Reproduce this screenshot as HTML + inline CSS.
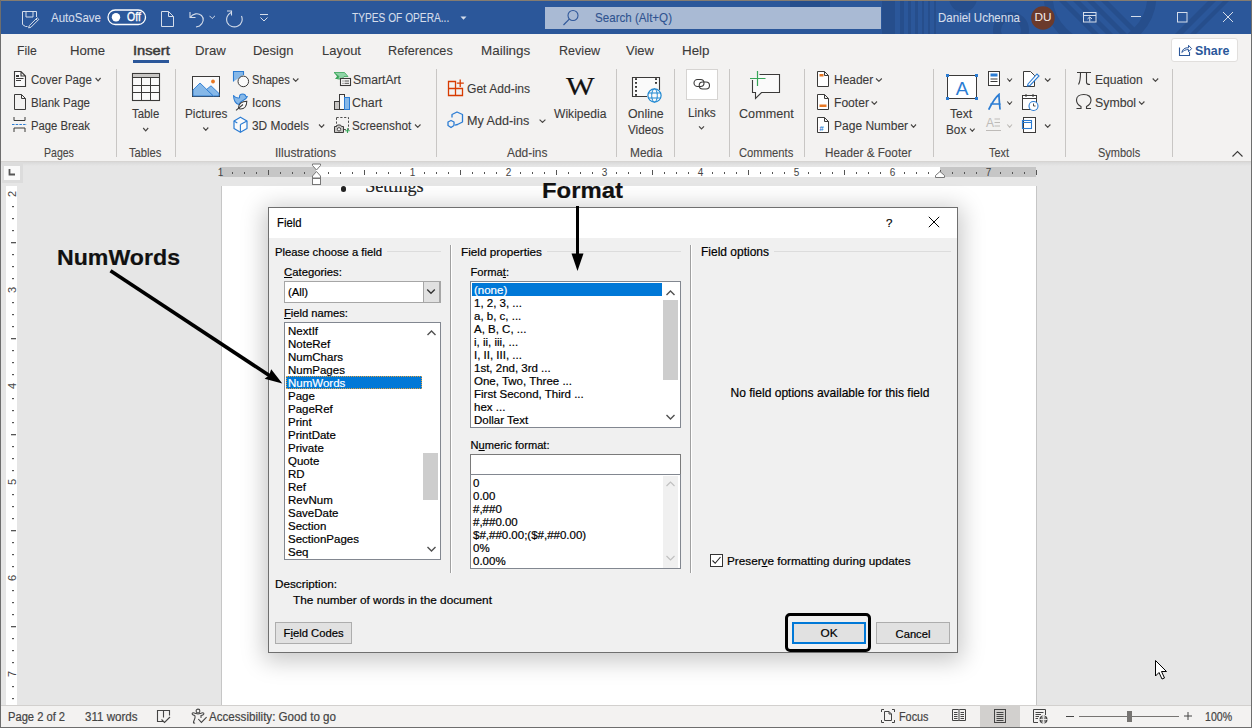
<!DOCTYPE html>
<html><head><meta charset="utf-8"><style>
html,body{margin:0;padding:0;width:1252px;height:728px;overflow:hidden;position:relative;background:#E6E6E6}
.t{position:absolute;white-space:nowrap;line-height:1;-webkit-text-stroke:0.2px currentColor}
.r{position:absolute;display:block}
u{text-decoration:underline;text-underline-offset:1px;text-decoration-thickness:1px}
</style></head><body>
<div class="r" style="left:0px;top:0px;width:1252px;height:728px;background:#E6E6E6"></div>
<div class="r" style="left:0px;top:0px;width:1252px;height:34px;background:#2B579A"></div>
<svg class="r" style="left:780px;top:0px;" width="472" height="34" viewBox="0 0 472 34">
<rect x="102" y="0" width="13" height="34" fill="#264E8C"/>
<rect x="120" y="0" width="4" height="34" fill="#264E8C"/>
<rect x="128" y="0" width="3" height="34" fill="#264E8C"/>
<rect x="135" y="0" width="3" height="34" fill="#264E8C"/>
<rect x="142" y="0" width="2" height="34" fill="#264E8C"/>
<rect x="148" y="0" width="2" height="34" fill="#264E8C"/>
<rect x="154" y="0" width="2" height="34" fill="#264E8C"/>
<circle cx="183" cy="-2" r="14" fill="#264E8C"/>
<circle cx="231" cy="30" r="14" fill="none" stroke="#264E8C" stroke-width="8"/>
<path d="M278 0 H285 L319 34 H312Z" fill="#264E8C"/>
<path d="M292 0 H299 L333 34 H326Z" fill="#264E8C"/>
<path d="M306 0 H313 L347 34 H340Z" fill="#264E8C"/>
<path d="M320 0 H327 L361 34 H354Z" fill="#264E8C"/>
<circle cx="320" cy="-5" r="52" fill="none" stroke="#264E8C" stroke-width="9"/>
<path d="M395 34 L429 0 H437 L403 34Z" fill="#264E8C"/>
<path d="M410 34 L444 0 H450 L416 34Z" fill="#264E8C"/>
<rect x="10" y="0" width="40" height="7" fill="#264E8C"/>
</svg>
<div class="r" style="left:0px;top:34px;width:1252px;height:127px;background:#F3F2F1"></div>
<div class="r" style="left:0px;top:161px;width:1252px;height:1px;background:#D6D4D2"></div>
<div class="r" style="left:0px;top:162px;width:1252px;height:4px;background:linear-gradient(#D9D9D9,#E6E6E6)"></div>
<div class="r" style="left:0px;top:0px;width:1252px;height:1px;background:#857C70"></div>
<div class="r" style="left:0px;top:0px;width:1px;height:728px;background:#6E6E6E"></div>
<div class="r" style="left:1251px;top:0px;width:1px;height:728px;background:#6E6E6E"></div>
<div class="r" style="left:0px;top:727px;width:1252px;height:1px;background:#6E6E6E"></div>
<svg class="r" style="left:21px;top:10px;" width="19" height="19" viewBox="0 0 19 19"><path d="M15.5 7 V1.5 H1.5 V14.5 L4.5 16.5 H6.5" fill="none" stroke="#D5DDEA" stroke-width="1"/>
<path d="M5 1.5 V7 H12 V1.5" fill="none" stroke="#D5DDEA" stroke-width="1"/>
<path d="M16.2 7.8 L17.8 9.4 L10 17.2 L7.6 17.9 L8.3 15.6Z M15 9 L16.6 10.6" fill="none" stroke="#D5DDEA" stroke-width="1"/></svg>
<div class="t" style="left:51.00px;top:11.57px;font-size:12.79px;color:#D5DDEA;font-weight:400;font-family:'Liberation Sans',sans-serif;transform:scaleX(0.9019);transform-origin:0 0;-webkit-text-stroke:0.1px currentColor;">AutoSave</div>
<svg class="r" style="left:107px;top:9px;" width="40" height="17" viewBox="0 0 40 17"><rect x="1" y="1" width="37.5" height="14.5" rx="7.25" fill="none" stroke="#FFFFFF" stroke-width="1.3"/>
<circle cx="9" cy="8.25" r="4.2" fill="#FFFFFF"/></svg>
<div class="t" style="left:126.80px;top:12.11px;font-size:11.92px;color:#FFFFFF;font-weight:400;font-family:'Liberation Sans',sans-serif;transform:scaleX(0.8806);transform-origin:0 0;-webkit-text-stroke:0.35px currentColor;">Off</div>
<svg class="r" style="left:160px;top:10px;" width="15" height="18" viewBox="0 0 15 18"><path d="M1.5 1.5 H8.5 L13.5 6.5 V16.5 H1.5Z M8.5 1.5 V6.5 H13.5" fill="none" stroke="#D5DDEA" stroke-width="1"/></svg>
<svg class="r" style="left:187px;top:10px;" width="18" height="18" viewBox="0 0 18 18"><path d="M3 2 V7.5 H8.5" fill="none" stroke="#D5DDEA" stroke-width="1.1"/>
<path d="M3.2 7.3 C6 3.5 11 2.5 14.5 5.5 C17.5 8.5 16.5 13 12.5 16 L9 17" fill="none" stroke="#D5DDEA" stroke-width="1.1"/></svg>
<svg class="r" style="left:209px;top:15px;" width="7" height="5" viewBox="0 0 7 5"><path d="M0.5 0.8 L3.2 3.5 L6 0.8" fill="none" stroke="#D5DDEA" stroke-width="1"/></svg>
<svg class="r" style="left:225px;top:10px;" width="20" height="18" viewBox="0 0 20 18"><path d="M6 2.5 C2 4.5 0.8 9 2.2 12.5 C4 16.5 9 18 13 16 C17 14 18 9.5 16.5 6" fill="none" stroke="#D5DDEA" stroke-width="1.1"/>
<path d="M2 1 H6.5 V5.5" fill="none" stroke="#D5DDEA" stroke-width="1.1"/></svg>
<svg class="r" style="left:259px;top:13px;" width="10" height="10" viewBox="0 0 10 10"><path d="M1 1.5 H9" stroke="#D5DDEA" stroke-width="1"/><path d="M1.5 4.5 L5 8 L8.5 4.5" fill="none" stroke="#D5DDEA" stroke-width="1"/></svg>
<div class="t" style="left:352.30px;top:11.97px;font-size:12.79px;color:#D5DDEA;font-weight:400;font-family:'Liberation Sans',sans-serif;transform:scaleX(0.7963);transform-origin:0 0;-webkit-text-stroke:0.1px currentColor;">TYPES OF OPERA...</div>
<svg class="r" style="left:460px;top:16px;" width="7" height="5" viewBox="0 0 7 5"><path d="M0.5 0.5 H6.5 L3.5 3.8Z" fill="#D5DDEA"/></svg>
<div class="r" style="left:545px;top:7px;width:336px;height:22px;background:#A9BAD4"></div>
<svg class="r" style="left:562px;top:9px;" width="18" height="17" viewBox="0 0 18 17"><circle cx="11" cy="6.5" r="5" fill="none" stroke="#30589A" stroke-width="1.1"/><path d="M7.3 10.2 L1.5 16" stroke="#30589A" stroke-width="1.2"/></svg>
<div class="t" style="left:594.50px;top:11.67px;font-size:12.79px;color:#2F5390;font-weight:400;font-family:'Liberation Sans',sans-serif;transform:scaleX(0.9072);transform-origin:0 0;-webkit-text-stroke:0.1px currentColor;">Search (Alt+Q)</div>
<div class="t" style="left:937.70px;top:11.97px;font-size:12.79px;color:#D5DDEA;font-weight:400;font-family:'Liberation Sans',sans-serif;transform:scaleX(0.9014);transform-origin:0 0;-webkit-text-stroke:0.1px currentColor;">Daniel Uchenna</div>
<svg class="r" style="left:1030px;top:6px;" width="26" height="25" viewBox="0 0 26 25"><circle cx="12.9" cy="12" r="11.8" fill="#6B3A2C"/></svg>
<div class="t" style="left:1034.48px;top:12.31px;font-size:11.80px;color:#F4ECE8;font-weight:400;font-family:'Liberation Sans',sans-serif;-webkit-text-stroke:0;">DU</div>
<svg class="r" style="left:1082px;top:11px;" width="16" height="12" viewBox="0 0 16 12"><rect x="1.5" y="1.5" width="12.5" height="9.5" fill="none" stroke="#D5DDEA" stroke-width="1"/><path d="M1.5 4.5 H14" stroke="#D5DDEA" stroke-width="1"/><path d="M7.75 10.5 V6 M5.5 8 L7.75 5.8 L10 8" fill="none" stroke="#D5DDEA" stroke-width="1"/></svg>
<div class="r" style="left:1131px;top:16px;width:10px;height:1px;background:#D5DDEA"></div>
<svg class="r" style="left:1176px;top:11px;" width="12" height="12" viewBox="0 0 12 12"><rect x="1.5" y="1.5" width="9.5" height="9.5" fill="none" stroke="#D5DDEA" stroke-width="1"/></svg>
<svg class="r" style="left:1222px;top:11px;" width="12" height="12" viewBox="0 0 12 12"><path d="M1 1 L11 11 M11 1 L1 11" stroke="#D5DDEA" stroke-width="1"/></svg>
<div class="t" style="left:17.30px;top:43.88px;font-size:13.37px;color:#3B3A39;font-weight:400;font-family:'Liberation Sans',sans-serif;transform:scaleX(0.9149);transform-origin:0 0;-webkit-text-stroke:0.1px currentColor;">File</div>
<div class="t" style="left:69.70px;top:43.88px;font-size:13.37px;color:#3B3A39;font-weight:400;font-family:'Liberation Sans',sans-serif;transform:scaleX(0.9876);transform-origin:0 0;-webkit-text-stroke:0.1px currentColor;">Home</div>
<div class="t" style="left:132.50px;top:43.88px;font-size:13.37px;color:#3B3A39;font-weight:400;font-family:'Liberation Sans',sans-serif;transform:scaleX(1.1000);transform-origin:0 0;-webkit-text-stroke:0.5px currentColor;">Insert</div>
<div class="t" style="left:194.70px;top:43.88px;font-size:13.37px;color:#3B3A39;font-weight:400;font-family:'Liberation Sans',sans-serif;transform:scaleX(0.9881);transform-origin:0 0;-webkit-text-stroke:0.1px currentColor;">Draw</div>
<div class="t" style="left:252.70px;top:43.88px;font-size:13.37px;color:#3B3A39;font-weight:400;font-family:'Liberation Sans',sans-serif;transform:scaleX(0.9709);transform-origin:0 0;-webkit-text-stroke:0.1px currentColor;">Design</div>
<div class="t" style="left:321.70px;top:43.88px;font-size:13.37px;color:#3B3A39;font-weight:400;font-family:'Liberation Sans',sans-serif;transform:scaleX(0.9712);transform-origin:0 0;-webkit-text-stroke:0.1px currentColor;">Layout</div>
<div class="t" style="left:388.30px;top:43.88px;font-size:13.37px;color:#3B3A39;font-weight:400;font-family:'Liberation Sans',sans-serif;transform:scaleX(0.9477);transform-origin:0 0;-webkit-text-stroke:0.1px currentColor;">References</div>
<div class="t" style="left:480.80px;top:43.88px;font-size:13.37px;color:#3B3A39;font-weight:400;font-family:'Liberation Sans',sans-serif;transform:scaleX(1.0055);transform-origin:0 0;-webkit-text-stroke:0.1px currentColor;">Mailings</div>
<div class="t" style="left:558.50px;top:43.88px;font-size:13.37px;color:#3B3A39;font-weight:400;font-family:'Liberation Sans',sans-serif;transform:scaleX(0.9404);transform-origin:0 0;-webkit-text-stroke:0.1px currentColor;">Review</div>
<div class="t" style="left:626.30px;top:43.88px;font-size:13.37px;color:#3B3A39;font-weight:400;font-family:'Liberation Sans',sans-serif;transform:scaleX(0.9750);transform-origin:0 0;-webkit-text-stroke:0.1px currentColor;">View</div>
<div class="t" style="left:681.50px;top:43.88px;font-size:13.37px;color:#3B3A39;font-weight:400;font-family:'Liberation Sans',sans-serif;transform:scaleX(1.0006);transform-origin:0 0;-webkit-text-stroke:0.1px currentColor;">Help</div>
<div class="r" style="left:133px;top:60px;width:36px;height:3px;background:#2B579A"></div>
<div class="r" style="left:1171px;top:38px;width:67px;height:24px;background:#FFFFFF;border:1px solid #E1DFDD;border-radius:3px;box-sizing:border-box"></div>
<svg class="r" style="left:1177px;top:42px;" width="16" height="16" viewBox="0 0 16 16"><path d="M2.5 5.5 V13.5 H12.5 V10" fill="none" stroke="#2B579A" stroke-width="1.1"/><path d="M4.8 10.5 C5.5 7 8 5.5 11.5 5.8 V3.3 L14.6 6.6 L11.5 9.8 V7.6 C8.8 7.4 6.6 8.5 4.8 10.5Z" fill="none" stroke="#2B579A" stroke-width="1" stroke-linejoin="round"/></svg>
<div class="t" style="left:1195.00px;top:44.13px;font-size:13.08px;color:#2B579A;font-weight:700;font-family:'Liberation Sans',sans-serif;transform:scaleX(0.9489);transform-origin:0 0;-webkit-text-stroke:0;">Share</div>
<svg class="r" style="left:13px;top:70px;" width="14" height="18" viewBox="0 0 14 18"><path d="M1.5 1.5 H8 L12.5 6 V16.5 H1.5Z M8 1.5 V6 H12.5" fill="#FAFAFA" stroke="#3B3A39" stroke-width="1.1"/><rect x="3" y="5" width="3" height="2" fill="#3B3A39"/><path d="M3 8.5 H10.5 M3 10.5 H8" stroke="#3B3A39" stroke-width="1"/></svg>
<div class="t" style="left:30.70px;top:73.96px;font-size:12.21px;color:#3B3A39;font-weight:400;font-family:'Liberation Sans',sans-serif;transform:scaleX(0.9438);transform-origin:0 0;-webkit-text-stroke:0.1px currentColor;">Cover Page</div>
<svg class="r" style="left:94px;top:77px;" width="8" height="5" viewBox="0 0 8 5"><path d="M1.60 1.00 L4.10 3.80 L6.60 1.00" fill="none" stroke="#484644" stroke-width="1.15"/></svg>
<svg class="r" style="left:13px;top:93px;" width="14" height="18" viewBox="0 0 14 18"><path d="M1.5 1.5 H8.5 L12.5 5.5 V16.5 H1.5Z M8.5 1.5 V5.5 H12.5" fill="none" stroke="#3B3A39" stroke-width="1"/></svg>
<div class="t" style="left:30.70px;top:96.96px;font-size:12.21px;color:#3B3A39;font-weight:400;font-family:'Liberation Sans',sans-serif;transform:scaleX(0.9454);transform-origin:0 0;-webkit-text-stroke:0.1px currentColor;">Blank Page</div>
<svg class="r" style="left:11px;top:116px;" width="17" height="17" viewBox="0 0 17 17"><path d="M3 1 V4.5 H14 V1" fill="none" stroke="#3B3A39" stroke-width="1"/><path d="M3 16 V12 H14 V16" fill="none" stroke="#3B3A39" stroke-width="1"/><path d="M1 8.5 H16" stroke="#2B7CD3" stroke-width="1" stroke-dasharray="2.5 1.2"/></svg>
<div class="t" style="left:30.70px;top:119.96px;font-size:12.21px;color:#3B3A39;font-weight:400;font-family:'Liberation Sans',sans-serif;transform:scaleX(0.9255);transform-origin:0 0;-webkit-text-stroke:0.1px currentColor;">Page Break</div>
<div class="t" style="left:44.00px;top:146.79px;font-size:12.06px;color:#484644;font-weight:400;font-family:'Liberation Sans',sans-serif;transform:scaleX(0.8746);transform-origin:0 0;-webkit-text-stroke:0.1px currentColor;">Pages</div>
<div class="r" style="left:116px;top:69px;width:1px;height:88px;background:#C8C6C4"></div>
<svg class="r" style="left:131px;top:72px;" width="30" height="30" viewBox="0 0 30 30"><rect x="1.5" y="1.5" width="27" height="27" fill="#FAFAFA" stroke="#3B3A39" stroke-width="1.1"/><rect x="2" y="2" width="26" height="3.5" fill="#C8C6C4"/><path d="M1.5 5.5 H28.5 M1.5 13.5 H28.5 M1.5 20.5 H28.5 M10.5 5.5 V28.5 M19.5 5.5 V28.5" stroke="#3B3A39" stroke-width="1"/></svg>
<div class="t" style="left:132.40px;top:108.06px;font-size:12.21px;color:#3B3A39;font-weight:400;font-family:'Liberation Sans',sans-serif;transform:scaleX(0.9329);transform-origin:0 0;-webkit-text-stroke:0.1px currentColor;">Table</div>
<svg class="r" style="left:142px;top:127px;" width="8" height="5" viewBox="0 0 8 5"><path d="M1.20 1.00 L3.70 3.80 L6.20 1.00" fill="none" stroke="#484644" stroke-width="1.15"/></svg>
<div class="t" style="left:129.40px;top:146.79px;font-size:12.06px;color:#484644;font-weight:400;font-family:'Liberation Sans',sans-serif;transform:scaleX(0.9323);transform-origin:0 0;-webkit-text-stroke:0.1px currentColor;">Tables</div>
<div class="r" style="left:175px;top:69px;width:1px;height:88px;background:#C8C6C4"></div>
<svg class="r" style="left:191px;top:75px;" width="30" height="23" viewBox="0 0 30 23"><rect x="1.5" y="1.5" width="27" height="20" fill="#FAFAFA" stroke="#3B3A39" stroke-width="1"/><path d="M2 21 V15 L9 8 L22.5 21Z" fill="#86B8E8" stroke="#2B7CD3" stroke-width="0.9"/><path d="M15.5 14.5 L20 10.8 L28 18.5 V21 H22.5Z" fill="#86B8E8" stroke="#2B7CD3" stroke-width="0.9"/><circle cx="22" cy="6.5" r="1.9" fill="#E87722"/></svg>
<div class="t" style="left:185.00px;top:108.16px;font-size:12.21px;color:#3B3A39;font-weight:400;font-family:'Liberation Sans',sans-serif;transform:scaleX(0.9639);transform-origin:0 0;-webkit-text-stroke:0.1px currentColor;">Pictures</div>
<svg class="r" style="left:202px;top:126px;" width="8" height="5" viewBox="0 0 8 5"><path d="M1.30 1.50 L3.80 4.30 L6.30 1.50" fill="none" stroke="#484644" stroke-width="1.15"/></svg>
<svg class="r" style="left:232px;top:70px;" width="18" height="18" viewBox="0 0 18 18"><path d="M1.5 11.5 V1.5 H11.5 V5" fill="#86B8E8" stroke="#2B7CD3" stroke-width="1.1"/><rect x="2" y="2" width="6" height="6" fill="#86B8E8"/><circle cx="11.3" cy="11.4" r="5.3" fill="#FAFAFA" stroke="#3B3A39" stroke-width="1"/></svg>
<div class="t" style="left:251.70px;top:74.26px;font-size:12.21px;color:#3B3A39;font-weight:400;font-family:'Liberation Sans',sans-serif;transform:scaleX(0.9136);transform-origin:0 0;-webkit-text-stroke:0.1px currentColor;">Shapes</div>
<svg class="r" style="left:292px;top:77px;" width="8" height="5" viewBox="0 0 8 5"><path d="M1.00 1.50 L3.70 4.30 L6.40 1.50" fill="none" stroke="#484644" stroke-width="1.15"/></svg>
<svg class="r" style="left:232px;top:93px;" width="18" height="18" viewBox="0 0 18 18"><path d="M1.5 2.5 Q4 5.5 7.5 4.8 Q7 1 10.8 1 Q13.3 1 13.8 3.3 L15.3 3.5 Q14 6.5 11.5 7.2 Q8.5 8.3 6.8 11.5 Q2 10.5 1.5 2.5Z" fill="#86B8E8" stroke="#2B7CD3" stroke-width="1.1" stroke-linejoin="round"/><path d="M6.5 15 C6.5 10.8 9.5 8.3 14.8 8.3 C14.8 13 12.3 16 8.5 16 C7.6 16 7 15.6 6.5 15Z" fill="#FAFAFA" stroke="#3B3A39" stroke-width="1.05"/><path d="M4 17.3 L11 11.5" stroke="#3B3A39" stroke-width="1.05"/></svg>
<div class="t" style="left:251.70px;top:97.16px;font-size:12.21px;color:#3B3A39;font-weight:400;font-family:'Liberation Sans',sans-serif;transform:scaleX(0.9838);transform-origin:0 0;-webkit-text-stroke:0.1px currentColor;">Icons</div>
<svg class="r" style="left:233px;top:116px;" width="16" height="18" viewBox="0 0 16 18"><path d="M7.4 1.2 L14 5 V12.5 L7.4 16.3 L1 12.5 V5Z" fill="#FAFAFA" stroke="#2B7CD3" stroke-width="1.2" stroke-linejoin="round"/><path d="M7.4 8.6 V16.3 M7.4 8.6 L14 5 M1 5 L4.3 6.9" fill="none" stroke="#2B7CD3" stroke-width="1.1"/></svg>
<div class="t" style="left:251.70px;top:120.16px;font-size:12.21px;color:#3B3A39;font-weight:400;font-family:'Liberation Sans',sans-serif;transform:scaleX(0.9755);transform-origin:0 0;-webkit-text-stroke:0.1px currentColor;">3D Models</div>
<svg class="r" style="left:318px;top:123px;" width="8" height="5" viewBox="0 0 8 5"><path d="M1.00 1.50 L3.60 4.30 L6.20 1.50" fill="none" stroke="#484644" stroke-width="1.15"/></svg>
<svg class="r" style="left:333px;top:71px;" width="19" height="16" viewBox="0 0 19 16"><path d="M1 1.5 H11.5 L15 5.5 H11 L9 8 H4.5 L6 5.5Z" fill="#8FD3A6" stroke="#37A558" stroke-width="0.8"/><path d="M1 1.5 L6 5.5 L4.5 8 H2 L4 5.5Z" fill="#37A558"/><rect x="7.5" y="7.5" width="10" height="7" fill="#FAFAFA" stroke="#3B3A39" stroke-width="1.1"/><path d="M9.5 10 H10.5 M11.5 10 H16 M9.5 12.3 H10.5 M11.5 12.3 H16" stroke="#3B3A39" stroke-width="0.9"/></svg>
<div class="t" style="left:352.60px;top:74.16px;font-size:12.21px;color:#3B3A39;font-weight:400;font-family:'Liberation Sans',sans-serif;transform:scaleX(0.9971);transform-origin:0 0;-webkit-text-stroke:0.1px currentColor;">SmartArt</div>
<svg class="r" style="left:333px;top:93px;" width="18" height="18" viewBox="0 0 18 18"><rect x="1.5" y="8.5" width="5" height="8" fill="#C8C6C4" stroke="#3B3A39" stroke-width="1"/><rect x="6.5" y="1.5" width="5" height="15" fill="#FAFAFA" stroke="#3B3A39" stroke-width="1"/><rect x="11.5" y="4.5" width="5" height="12" fill="#86B8E8" stroke="#2B7CD3" stroke-width="1"/></svg>
<div class="t" style="left:352.40px;top:97.16px;font-size:12.21px;color:#3B3A39;font-weight:400;font-family:'Liberation Sans',sans-serif;transform:scaleX(1.0125);transform-origin:0 0;-webkit-text-stroke:0.1px currentColor;">Chart</div>
<svg class="r" style="left:333px;top:116px;" width="19" height="18" viewBox="0 0 19 18"><rect x="3.5" y="1.5" width="12" height="12" fill="none" stroke="#3B3A39" stroke-width="0.9" stroke-dasharray="2.2 1.6"/><path d="M1.5 10.5 H3.5 L4.5 9 H7.5 L8.5 10.5 H10.5 V16.5 H1.5Z" fill="#C8C6C4" stroke="#3B3A39" stroke-width="1"/><circle cx="6" cy="13.3" r="1.7" fill="#FAFAFA" stroke="#3B3A39" stroke-width="0.9"/><path d="M14.5 12.3 V17 M12.2 14.7 H16.8" stroke="#37A558" stroke-width="1.1"/></svg>
<div class="t" style="left:352.40px;top:120.16px;font-size:12.21px;color:#3B3A39;font-weight:400;font-family:'Liberation Sans',sans-serif;transform:scaleX(0.9592);transform-origin:0 0;-webkit-text-stroke:0.1px currentColor;">Screenshot</div>
<svg class="r" style="left:414px;top:123px;" width="8" height="5" viewBox="0 0 8 5"><path d="M1.00 1.50 L3.75 4.30 L6.50 1.50" fill="none" stroke="#484644" stroke-width="1.15"/></svg>
<div class="t" style="left:275.00px;top:146.79px;font-size:12.06px;color:#484644;font-weight:400;font-family:'Liberation Sans',sans-serif;transform:scaleX(1.0019);transform-origin:0 0;-webkit-text-stroke:0.1px currentColor;">Illustrations</div>
<div class="r" style="left:436px;top:69px;width:1px;height:88px;background:#C8C6C4"></div>
<svg class="r" style="left:447px;top:78px;" width="18" height="20" viewBox="0 0 18 20"><path d="M1.5 3.5 H8.5 V10.5 H1.5Z M1.5 10.5 V17.5 H15.5 V10.5 H8.5 V17.5" fill="none" stroke="#D83B01" stroke-width="1.3"/><path d="M13.2 1.5 V9 M9.8 5.1 H16.8" stroke="#D83B01" stroke-width="1.3"/></svg>
<div class="t" style="left:467.10px;top:82.86px;font-size:12.21px;color:#3B3A39;font-weight:400;font-family:'Liberation Sans',sans-serif;transform:scaleX(0.9898);transform-origin:0 0;-webkit-text-stroke:0.1px currentColor;">Get Add-ins</div>
<svg class="r" style="left:446px;top:110px;" width="19" height="20" viewBox="0 0 19 20"><path d="M6 7.5 V4.5 L11 2 L16.5 4.5 V12 L11.5 14.5 L9 15.2" fill="none" stroke="#2B7CD3" stroke-width="1.3" stroke-linejoin="round"/><path d="M5 10.5 L8 12 V15.5 L5 17.5 L2 15.5 V12Z" fill="none" stroke="#2B7CD3" stroke-width="1.3" stroke-linejoin="round"/></svg>
<div class="t" style="left:467.10px;top:115.16px;font-size:12.21px;color:#3B3A39;font-weight:400;font-family:'Liberation Sans',sans-serif;transform:scaleX(1.0319);transform-origin:0 0;-webkit-text-stroke:0.1px currentColor;">My Add-ins</div>
<svg class="r" style="left:538px;top:118px;" width="8" height="5" viewBox="0 0 8 5"><path d="M1.60 1.60 L4.50 4.40 L7.40 1.60" fill="none" stroke="#484644" stroke-width="1.15"/></svg>
<div class="t" style="left:566.00px;top:73.57px;font-size:25.95px;color:#111;font-weight:400;font-family:'Liberation Serif',serif;transform:scaleX(1.1633);transform-origin:0 0;">W</div>
<div class="t" style="left:554.00px;top:108.06px;font-size:12.21px;color:#3B3A39;font-weight:400;font-family:'Liberation Sans',sans-serif;transform:scaleX(0.9904);transform-origin:0 0;-webkit-text-stroke:0.1px currentColor;">Wikipedia</div>
<div class="t" style="left:506.60px;top:146.79px;font-size:12.06px;color:#484644;font-weight:400;font-family:'Liberation Sans',sans-serif;transform:scaleX(0.9904);transform-origin:0 0;-webkit-text-stroke:0.1px currentColor;">Add-ins</div>
<div class="r" style="left:616px;top:69px;width:1px;height:88px;background:#C8C6C4"></div>
<svg class="r" style="left:630px;top:76px;" width="34" height="28" viewBox="0 0 34 28"><path d="M22 20.5 H2.5 V1.5 H29.5 V14" fill="#FAFAFA" stroke="#3B3A39" stroke-width="1.1"/><g fill="#3B3A39"><rect x="5" y="2.2" width="2" height="1.8"/><rect x="5" y="6" width="2" height="1.8"/><rect x="5" y="10" width="2" height="1.8"/><rect x="5" y="14" width="2" height="1.8"/><rect x="5" y="18" width="2" height="1.8"/><rect x="25" y="2.2" width="2" height="1.8"/><rect x="25" y="6" width="2" height="1.8"/></g><circle cx="24.5" cy="19.5" r="7.6" fill="#F3F2F1"/><circle cx="24.5" cy="19.5" r="6.6" fill="#FAFAFA" stroke="#1F88D2" stroke-width="1.2"/><ellipse cx="24.5" cy="19.5" rx="2.8" ry="6.6" fill="none" stroke="#1F88D2" stroke-width="1"/><path d="M18.2 17 H30.8 M18.2 22 H30.8" stroke="#1F88D2" stroke-width="1"/></svg>
<div class="t" style="left:627.80px;top:108.06px;font-size:12.21px;color:#3B3A39;font-weight:400;font-family:'Liberation Sans',sans-serif;transform:scaleX(1.0123);transform-origin:0 0;-webkit-text-stroke:0.1px currentColor;">Online</div>
<div class="t" style="left:627.80px;top:123.56px;font-size:12.21px;color:#3B3A39;font-weight:400;font-family:'Liberation Sans',sans-serif;transform:scaleX(0.9624);transform-origin:0 0;-webkit-text-stroke:0.1px currentColor;">Videos</div>
<div class="t" style="left:630.00px;top:146.79px;font-size:12.06px;color:#484644;font-weight:400;font-family:'Liberation Sans',sans-serif;transform:scaleX(0.9865);transform-origin:0 0;-webkit-text-stroke:0.1px currentColor;">Media</div>
<div class="r" style="left:674px;top:69px;width:1px;height:88px;background:#C8C6C4"></div>
<div class="r" style="left:686px;top:69px;width:32px;height:31px;background:#FFFFFF;border:1px solid #D6D4D2;box-sizing:border-box"></div>
<svg class="r" style="left:692px;top:78px;" width="19" height="13" viewBox="0 0 19 13"><rect x="2" y="1.5" width="10" height="7" rx="3.5" fill="none" stroke="#3B3A39" stroke-width="1.1"/><rect x="7.2" y="4" width="10.3" height="7" rx="3.5" fill="none" stroke="#3B3A39" stroke-width="1.1"/></svg>
<div class="t" style="left:687.70px;top:106.76px;font-size:12.21px;color:#3B3A39;font-weight:400;font-family:'Liberation Sans',sans-serif;transform:scaleX(0.9754);transform-origin:0 0;-webkit-text-stroke:0.1px currentColor;">Links</div>
<svg class="r" style="left:698px;top:125px;" width="8" height="5" viewBox="0 0 8 5"><path d="M1.00 1.30 L3.50 3.90 L6.00 1.30" fill="none" stroke="#484644" stroke-width="1.15"/></svg>
<div class="r" style="left:729px;top:69px;width:1px;height:88px;background:#C8C6C4"></div>
<svg class="r" style="left:748px;top:69px;" width="34" height="32" viewBox="0 0 34 32"><path d="M11.5 5.5 H31.5 V23.5 H13.5 L7.5 29.5 V23.5 H4.5 V11" fill="#FAFAFA" stroke="#3B3A39" stroke-width="1.1"/><path d="M9.5 2 V17 M2 9.5 H17.5" stroke="#37A558" stroke-width="1.2"/></svg>
<div class="t" style="left:738.80px;top:108.06px;font-size:12.21px;color:#3B3A39;font-weight:400;font-family:'Liberation Sans',sans-serif;transform:scaleX(1.0342);transform-origin:0 0;-webkit-text-stroke:0.1px currentColor;">Comment</div>
<div class="t" style="left:738.80px;top:146.79px;font-size:12.06px;color:#484644;font-weight:400;font-family:'Liberation Sans',sans-serif;transform:scaleX(0.9314);transform-origin:0 0;-webkit-text-stroke:0.1px currentColor;">Comments</div>
<div class="r" style="left:804px;top:69px;width:1px;height:88px;background:#C8C6C4"></div>
<svg class="r" style="left:816px;top:70px;" width="14" height="18" viewBox="0 0 14 18"><path d="M1.5 1.5 H8.5 L12.5 5.5 V16.5 H1.5Z M8.5 1.5 V5.5 H12.5" fill="#FFFFFF" stroke="#3B3A39" stroke-width="1"/><rect x="3.5" y="4" width="4" height="2.5" fill="#E87722"/></svg>
<div class="t" style="left:833.70px;top:74.16px;font-size:12.21px;color:#3B3A39;font-weight:400;font-family:'Liberation Sans',sans-serif;transform:scaleX(0.9800);transform-origin:0 0;-webkit-text-stroke:0.1px currentColor;">Header</div>
<svg class="r" style="left:875px;top:77px;" width="8" height="5" viewBox="0 0 8 5"><path d="M1.00 1.50 L3.90 4.30 L6.80 1.50" fill="none" stroke="#484644" stroke-width="1.15"/></svg>
<svg class="r" style="left:816px;top:93px;" width="14" height="18" viewBox="0 0 14 18"><path d="M1.5 1.5 H8.5 L12.5 5.5 V16.5 H1.5Z M8.5 1.5 V5.5 H12.5" fill="#FFFFFF" stroke="#3B3A39" stroke-width="1"/><rect x="3.5" y="11.5" width="7" height="2.5" fill="#E87722"/></svg>
<div class="t" style="left:833.70px;top:97.16px;font-size:12.21px;color:#3B3A39;font-weight:400;font-family:'Liberation Sans',sans-serif;transform:scaleX(0.9901);transform-origin:0 0;-webkit-text-stroke:0.1px currentColor;">Footer</div>
<svg class="r" style="left:870px;top:100px;" width="8" height="5" viewBox="0 0 8 5"><path d="M1.60 1.50 L4.30 4.30 L7.00 1.50" fill="none" stroke="#484644" stroke-width="1.15"/></svg>
<svg class="r" style="left:816px;top:116px;" width="14" height="18" viewBox="0 0 14 18"><path d="M1.5 1.5 H8.5 L12.5 5.5 V16.5 H1.5Z M8.5 1.5 V5.5 H12.5" fill="#FFFFFF" stroke="#3B3A39" stroke-width="1"/><text x="3.2" y="14.5" font-size="8" font-family="Liberation Sans" font-weight="700" fill="#2B7CD3">#</text></svg>
<div class="t" style="left:833.70px;top:120.16px;font-size:12.21px;color:#3B3A39;font-weight:400;font-family:'Liberation Sans',sans-serif;transform:scaleX(0.9845);transform-origin:0 0;-webkit-text-stroke:0.1px currentColor;">Page Number</div>
<svg class="r" style="left:910px;top:123px;" width="8" height="5" viewBox="0 0 8 5"><path d="M1.00 1.50 L3.50 4.30 L6.00 1.50" fill="none" stroke="#484644" stroke-width="1.15"/></svg>
<div class="t" style="left:825.10px;top:146.79px;font-size:12.06px;color:#484644;font-weight:400;font-family:'Liberation Sans',sans-serif;transform:scaleX(0.9717);transform-origin:0 0;-webkit-text-stroke:0.1px currentColor;">Header &amp; Footer</div>
<div class="r" style="left:933px;top:69px;width:1px;height:88px;background:#C8C6C4"></div>
<svg class="r" style="left:945px;top:73px;" width="34" height="28" viewBox="0 0 34 28"><rect x="2.5" y="2.5" width="29" height="23" fill="#FFFFFF" stroke="#3B3A39" stroke-width="1"/><text x="17" y="22" font-size="19" text-anchor="middle" font-family="Liberation Sans" fill="#2B7CD3">A</text><rect x="1" y="1" width="3" height="3" fill="#2B7CD3"/><rect x="30" y="1" width="3" height="3" fill="#2B7CD3"/><rect x="1" y="24" width="3" height="3" fill="#2B7CD3"/><rect x="30" y="24" width="3" height="3" fill="#2B7CD3"/></svg>
<div class="t" style="left:950.40px;top:107.66px;font-size:12.21px;color:#3B3A39;font-weight:400;font-family:'Liberation Sans',sans-serif;transform:scaleX(0.9922);transform-origin:0 0;-webkit-text-stroke:0.1px currentColor;">Text</div>
<div class="t" style="left:945.80px;top:124.16px;font-size:12.21px;color:#3B3A39;font-weight:400;font-family:'Liberation Sans',sans-serif;transform:scaleX(0.9652);transform-origin:0 0;-webkit-text-stroke:0.1px currentColor;">Box</div>
<svg class="r" style="left:969px;top:127px;" width="7" height="5" viewBox="0 0 7 5"><path d="M1.00 1.70 L3.30 4.30 L5.60 1.70" fill="none" stroke="#484644" stroke-width="1.15"/></svg>
<svg class="r" style="left:986px;top:70px;" width="16" height="18" viewBox="0 0 16 18"><rect x="2.5" y="1.5" width="11" height="14" fill="#FFFFFF" stroke="#3B3A39" stroke-width="1"/><rect x="4.5" y="3.5" width="7" height="3" fill="#2B7CD3"/><path d="M4.5 9 H11.5 M4.5 11.5 H11.5" stroke="#3B3A39" stroke-width="1"/></svg>
<svg class="r" style="left:1006px;top:77px;" width="7" height="5" viewBox="0 0 7 5"><path d="M1.30 1.50 L3.65 4.30 L6.00 1.50" fill="none" stroke="#484644" stroke-width="1.15"/></svg>
<svg class="r" style="left:986px;top:93px;" width="16" height="18" viewBox="0 0 16 18"><path d="M3 16 C6 10 10 4 13 1.5 C13 6 13.5 11 14 16 M5 11 H14" fill="none" stroke="#2B7CD3" stroke-width="1.7" stroke-linecap="round"/></svg>
<svg class="r" style="left:1006px;top:100px;" width="7" height="5" viewBox="0 0 7 5"><path d="M1.30 1.50 L3.65 4.30 L6.00 1.50" fill="none" stroke="#484644" stroke-width="1.15"/></svg>
<svg class="r" style="left:985px;top:115px;" width="18" height="18" viewBox="0 0 18 18"><text x="1" y="12" font-size="12" font-family="Liberation Sans" fill="#BEBBB8">A</text><path d="M9.5 4 H15 M9.5 7.5 H15 M9.5 11 H15 M1 15.5 H16" stroke="#BEBBB8" stroke-width="1"/></svg>
<svg class="r" style="left:1006px;top:123px;" width="7" height="5" viewBox="0 0 7 5"><path d="M1.30 1.50 L3.65 4.30 L6.00 1.50" fill="none" stroke="#BEBBB8" stroke-width="1.15"/></svg>
<svg class="r" style="left:1022px;top:70px;" width="18" height="18" viewBox="0 0 18 18"><path d="M1.5 1.5 H8.5 L12.5 5.5 V16.5 H1.5Z" fill="#FFFFFF" stroke="#3B3A39" stroke-width="1"/><path d="M6 14 L15 4 L17 6 L8 15.5 L5.5 16Z" fill="#FFFFFF" stroke="#2B7CD3" stroke-width="1.1"/></svg>
<svg class="r" style="left:1044px;top:77px;" width="8" height="5" viewBox="0 0 8 5"><path d="M1.00 1.50 L3.70 4.30 L6.40 1.50" fill="none" stroke="#484644" stroke-width="1.15"/></svg>
<svg class="r" style="left:1021px;top:93px;" width="19" height="19" viewBox="0 0 19 19"><rect x="1.5" y="2.5" width="14" height="14" fill="#FFFFFF" stroke="#3B3A39" stroke-width="1"/><path d="M1.5 5.5 H15.5 M5 1 V4 M12 1 V4" stroke="#3B3A39" stroke-width="1"/><circle cx="12.5" cy="13" r="4.5" fill="#FFFFFF" stroke="#2B7CD3" stroke-width="1.1"/><path d="M12.5 10.5 V13 H14.5" fill="none" stroke="#3B3A39" stroke-width="0.9"/></svg>
<svg class="r" style="left:1021px;top:116px;" width="17" height="18" viewBox="0 0 17 18"><rect x="2.5" y="1.5" width="12" height="15" fill="#FFFFFF" stroke="#3B3A39" stroke-width="1"/><rect x="1.5" y="4.5" width="9" height="8" fill="none" stroke="#2B7CD3" stroke-width="1.1"/><path d="M1.5 6.5 H10.5" stroke="#2B7CD3" stroke-width="1"/></svg>
<svg class="r" style="left:1044px;top:123px;" width="8" height="5" viewBox="0 0 8 5"><path d="M1.00 1.50 L3.70 4.30 L6.40 1.50" fill="none" stroke="#484644" stroke-width="1.15"/></svg>
<div class="t" style="left:989.20px;top:146.79px;font-size:12.06px;color:#484644;font-weight:400;font-family:'Liberation Sans',sans-serif;transform:scaleX(0.9046);transform-origin:0 0;-webkit-text-stroke:0.1px currentColor;">Text</div>
<div class="r" style="left:1065px;top:69px;width:1px;height:88px;background:#C8C6C4"></div>
<svg class="r" style="left:1076px;top:71px;" width="16" height="15" viewBox="0 0 16 15"><path d="M1 1.5 H15 M4.5 1.5 C4.5 6 4.5 10 2.5 13.5 M10.5 1.5 V11.5 C10.5 13 11.5 13.5 14 13.5" fill="none" stroke="#3B3A39" stroke-width="1.1"/></svg>
<div class="t" style="left:1094.70px;top:74.16px;font-size:12.21px;color:#3B3A39;font-weight:400;font-family:'Liberation Sans',sans-serif;transform:scaleX(0.9905);transform-origin:0 0;-webkit-text-stroke:0.1px currentColor;">Equation</div>
<svg class="r" style="left:1151px;top:77px;" width="8" height="5" viewBox="0 0 8 5"><path d="M1.70 1.50 L4.45 4.30 L7.20 1.50" fill="none" stroke="#484644" stroke-width="1.15"/></svg>
<svg class="r" style="left:1075px;top:93px;" width="18" height="18" viewBox="0 0 18 18"><path d="M1.5 15.5 H6 V13.5 C3 12 1.5 9.5 1.5 7 C1.5 3.5 4.5 1.5 8.75 1.5 C13 1.5 16 3.5 16 7 C16 9.5 14.5 12 11.5 13.5 V15.5 H16" fill="none" stroke="#3B3A39" stroke-width="1.1"/></svg>
<div class="t" style="left:1094.70px;top:97.16px;font-size:12.21px;color:#3B3A39;font-weight:400;font-family:'Liberation Sans',sans-serif;transform:scaleX(1.0098);transform-origin:0 0;-webkit-text-stroke:0.1px currentColor;">Symbol</div>
<svg class="r" style="left:1138px;top:100px;" width="8" height="5" viewBox="0 0 8 5"><path d="M1.00 1.50 L3.70 4.30 L6.40 1.50" fill="none" stroke="#484644" stroke-width="1.15"/></svg>
<div class="t" style="left:1098.10px;top:146.79px;font-size:12.06px;color:#484644;font-weight:400;font-family:'Liberation Sans',sans-serif;transform:scaleX(0.9124);transform-origin:0 0;-webkit-text-stroke:0.1px currentColor;">Symbols</div>
<div class="r" style="left:1172px;top:69px;width:1px;height:88px;background:#C8C6C4"></div>
<svg class="r" style="left:1231px;top:150px;" width="13" height="8" viewBox="0 0 13 8"><path d="M1.5 6.5 L6.5 1.5 L11.5 6.5" fill="none" stroke="#3B3A39" stroke-width="1.1"/></svg>
<div class="r" style="left:221px;top:186px;width:816px;height:519px;background:#FFFFFF;border-left:1px solid #C6C6C6;border-right:1px solid #C6C6C6;box-sizing:border-box"></div>
<div class="r" style="left:222px;top:186px;width:814px;height:30px;overflow:hidden">
<div style="position:absolute;left:119.2px;top:0.3px;width:5.3px;height:5.3px;border-radius:50%;background:#222"></div>
<div class="t" style="left:143.20px;top:-9.00px;font-size:18.15px;color:#222;font-weight:400;font-family:'Liberation Serif',serif;">Settings</div>
</div>
<div class="r" style="left:2px;top:162px;width:21px;height:21px;background:#DCDCDC"></div>
<div class="r" style="left:4px;top:166px;width:16px;height:14px;background:#FAFAFA"></div>
<svg class="r" style="left:8px;top:169px;" width="8" height="8" viewBox="0 0 8 8"><path d="M1.5 0 V5.5 H7" fill="none" stroke="#555" stroke-width="1.8"/></svg>
<div class="r" style="left:220px;top:167px;width:816px;height:10px;background:#C6C6C6"></div>
<div class="r" style="left:316px;top:167px;width:624px;height:10px;background:#FFFFFF"></div>
<svg class="r" style="left:212px;top:167px;" width="830" height="10" viewBox="0 0 830 10"><text x="8.5" y="9" font-size="10" text-anchor="middle" font-family="Liberation Sans" fill="#444">1</text><rect x="20" y="5" width="1" height="2" fill="#555"/><rect x="32" y="5" width="1" height="2" fill="#555"/><rect x="44" y="5" width="1" height="2" fill="#555"/><rect x="56" y="3" width="1" height="5" fill="#555"/><rect x="68" y="5" width="1" height="2" fill="#555"/><rect x="80" y="5" width="1" height="2" fill="#555"/><rect x="92" y="5" width="1" height="2" fill="#555"/><rect x="116" y="5" width="1" height="2" fill="#555"/><rect x="128" y="5" width="1" height="2" fill="#555"/><rect x="140" y="5" width="1" height="2" fill="#555"/><rect x="152" y="3" width="1" height="5" fill="#555"/><rect x="164" y="5" width="1" height="2" fill="#555"/><rect x="176" y="5" width="1" height="2" fill="#555"/><rect x="188" y="5" width="1" height="2" fill="#555"/><text x="200.5" y="9" font-size="10" text-anchor="middle" font-family="Liberation Sans" fill="#444">1</text><rect x="212" y="5" width="1" height="2" fill="#555"/><rect x="224" y="5" width="1" height="2" fill="#555"/><rect x="236" y="5" width="1" height="2" fill="#555"/><rect x="248" y="3" width="1" height="5" fill="#555"/><rect x="260" y="5" width="1" height="2" fill="#555"/><rect x="272" y="5" width="1" height="2" fill="#555"/><rect x="284" y="5" width="1" height="2" fill="#555"/><text x="296.5" y="9" font-size="10" text-anchor="middle" font-family="Liberation Sans" fill="#444">2</text><rect x="308" y="5" width="1" height="2" fill="#555"/><rect x="320" y="5" width="1" height="2" fill="#555"/><rect x="332" y="5" width="1" height="2" fill="#555"/><rect x="344" y="3" width="1" height="5" fill="#555"/><rect x="356" y="5" width="1" height="2" fill="#555"/><rect x="368" y="5" width="1" height="2" fill="#555"/><rect x="380" y="5" width="1" height="2" fill="#555"/><text x="392.5" y="9" font-size="10" text-anchor="middle" font-family="Liberation Sans" fill="#444">3</text><rect x="404" y="5" width="1" height="2" fill="#555"/><rect x="416" y="5" width="1" height="2" fill="#555"/><rect x="428" y="5" width="1" height="2" fill="#555"/><rect x="440" y="3" width="1" height="5" fill="#555"/><rect x="452" y="5" width="1" height="2" fill="#555"/><rect x="464" y="5" width="1" height="2" fill="#555"/><rect x="476" y="5" width="1" height="2" fill="#555"/><text x="488.5" y="9" font-size="10" text-anchor="middle" font-family="Liberation Sans" fill="#444">4</text><rect x="500" y="5" width="1" height="2" fill="#555"/><rect x="512" y="5" width="1" height="2" fill="#555"/><rect x="524" y="5" width="1" height="2" fill="#555"/><rect x="536" y="3" width="1" height="5" fill="#555"/><rect x="548" y="5" width="1" height="2" fill="#555"/><rect x="560" y="5" width="1" height="2" fill="#555"/><rect x="572" y="5" width="1" height="2" fill="#555"/><text x="584.5" y="9" font-size="10" text-anchor="middle" font-family="Liberation Sans" fill="#444">5</text><rect x="596" y="5" width="1" height="2" fill="#555"/><rect x="608" y="5" width="1" height="2" fill="#555"/><rect x="620" y="5" width="1" height="2" fill="#555"/><rect x="632" y="3" width="1" height="5" fill="#555"/><rect x="644" y="5" width="1" height="2" fill="#555"/><rect x="656" y="5" width="1" height="2" fill="#555"/><rect x="668" y="5" width="1" height="2" fill="#555"/><text x="680.5" y="9" font-size="10" text-anchor="middle" font-family="Liberation Sans" fill="#444">6</text><rect x="692" y="5" width="1" height="2" fill="#555"/><rect x="704" y="5" width="1" height="2" fill="#555"/><rect x="716" y="5" width="1" height="2" fill="#555"/><rect x="728" y="3" width="1" height="5" fill="#555"/><rect x="740" y="5" width="1" height="2" fill="#555"/><rect x="752" y="5" width="1" height="2" fill="#555"/><rect x="764" y="5" width="1" height="2" fill="#555"/><text x="776.5" y="9" font-size="10" text-anchor="middle" font-family="Liberation Sans" fill="#444">7</text><rect x="788" y="5" width="1" height="2" fill="#555"/><rect x="800" y="5" width="1" height="2" fill="#555"/><rect x="812" y="5" width="1" height="2" fill="#555"/><rect x="824" y="3" width="1" height="5" fill="#555"/><rect x="836" y="5" width="1" height="2" fill="#555"/><rect x="848" y="5" width="1" height="2" fill="#555"/><rect x="860" y="5" width="1" height="2" fill="#555"/><text x="872.5" y="9" font-size="10" text-anchor="middle" font-family="Liberation Sans" fill="#444">8</text><rect x="884" y="5" width="1" height="2" fill="#555"/><rect x="896" y="5" width="1" height="2" fill="#555"/><rect x="908" y="5" width="1" height="2" fill="#555"/><rect x="920" y="3" width="1" height="5" fill="#555"/></svg>
<svg class="r" style="left:311px;top:163px;" width="11" height="23" viewBox="0 0 11 23"><path d="M1.5 1 H9.5 V2.5 L5.5 7 L1.5 2.5Z" fill="#FFF" stroke="#777" stroke-width="1"/><path d="M1.5 13 L5.5 8.5 L9.5 13 V15 H1.5Z" fill="#FFF" stroke="#777" stroke-width="1"/><rect x="1.5" y="15.5" width="8" height="6" fill="#FFF" stroke="#777" stroke-width="1"/></svg>
<svg class="r" style="left:934px;top:170px;" width="12" height="9" viewBox="0 0 12 9"><path d="M1.5 7.5 V5.5 L6 1.5 L10.5 5.5 V7.5Z" fill="#FFF" stroke="#777" stroke-width="1"/></svg>
<div class="r" style="left:6px;top:186px;width:11px;height:519px;background:#FFFFFF"></div>
<svg class="r" style="left:6px;top:186px;" width="11" height="519" viewBox="0 0 11 519"><text transform="translate(6.5,8) rotate(-90)" font-size="11" text-anchor="middle" font-family="Liberation Sans" fill="#444" y="3.5">2</text><rect x="6" y="20" width="2" height="1.2" fill="#555"/><rect x="6" y="32" width="2" height="1.2" fill="#555"/><rect x="6" y="44" width="2" height="1.2" fill="#555"/><rect x="5" y="56" width="5" height="1.3" fill="#555"/><rect x="6" y="68" width="2" height="1.2" fill="#555"/><rect x="6" y="80" width="2" height="1.2" fill="#555"/><rect x="6" y="92" width="2" height="1.2" fill="#555"/><text transform="translate(6.5,104) rotate(-90)" font-size="11" text-anchor="middle" font-family="Liberation Sans" fill="#444" y="3.5">3</text><rect x="6" y="116" width="2" height="1.2" fill="#555"/><rect x="6" y="128" width="2" height="1.2" fill="#555"/><rect x="6" y="140" width="2" height="1.2" fill="#555"/><rect x="5" y="152" width="5" height="1.3" fill="#555"/><rect x="6" y="164" width="2" height="1.2" fill="#555"/><rect x="6" y="176" width="2" height="1.2" fill="#555"/><rect x="6" y="188" width="2" height="1.2" fill="#555"/><text transform="translate(6.5,200) rotate(-90)" font-size="11" text-anchor="middle" font-family="Liberation Sans" fill="#444" y="3.5">4</text><rect x="6" y="212" width="2" height="1.2" fill="#555"/><rect x="6" y="224" width="2" height="1.2" fill="#555"/><rect x="6" y="236" width="2" height="1.2" fill="#555"/><rect x="5" y="248" width="5" height="1.3" fill="#555"/><rect x="6" y="260" width="2" height="1.2" fill="#555"/><rect x="6" y="272" width="2" height="1.2" fill="#555"/><rect x="6" y="284" width="2" height="1.2" fill="#555"/><text transform="translate(6.5,296) rotate(-90)" font-size="11" text-anchor="middle" font-family="Liberation Sans" fill="#444" y="3.5">5</text><rect x="6" y="308" width="2" height="1.2" fill="#555"/><rect x="6" y="320" width="2" height="1.2" fill="#555"/><rect x="6" y="332" width="2" height="1.2" fill="#555"/><rect x="5" y="344" width="5" height="1.3" fill="#555"/><rect x="6" y="356" width="2" height="1.2" fill="#555"/><rect x="6" y="368" width="2" height="1.2" fill="#555"/><rect x="6" y="380" width="2" height="1.2" fill="#555"/><text transform="translate(6.5,392) rotate(-90)" font-size="11" text-anchor="middle" font-family="Liberation Sans" fill="#444" y="3.5">6</text><rect x="6" y="404" width="2" height="1.2" fill="#555"/><rect x="6" y="416" width="2" height="1.2" fill="#555"/><rect x="6" y="428" width="2" height="1.2" fill="#555"/><rect x="5" y="440" width="5" height="1.3" fill="#555"/><rect x="6" y="452" width="2" height="1.2" fill="#555"/><rect x="6" y="464" width="2" height="1.2" fill="#555"/><rect x="6" y="476" width="2" height="1.2" fill="#555"/><text transform="translate(6.5,488) rotate(-90)" font-size="11" text-anchor="middle" font-family="Liberation Sans" fill="#444" y="3.5">7</text><rect x="6" y="500" width="2" height="1.2" fill="#555"/><rect x="6" y="512" width="2" height="1.2" fill="#555"/></svg>
<div class="r" style="left:1px;top:705px;width:1250px;height:1px;background:#D2D0CE"></div>
<div class="r" style="left:1px;top:706px;width:1250px;height:21px;background:#F3F2F1"></div>
<div class="t" style="left:8.00px;top:710.86px;font-size:12.21px;color:#444;font-weight:400;font-family:'Liberation Sans',sans-serif;transform:scaleX(0.9136);transform-origin:0 0;">Page 2 of 2</div>
<div class="t" style="left:85.00px;top:710.86px;font-size:12.21px;color:#444;font-weight:400;font-family:'Liberation Sans',sans-serif;transform:scaleX(0.9481);transform-origin:0 0;">311 words</div>
<svg class="r" style="left:155px;top:709px;" width="18" height="16" viewBox="0 0 18 16"><path d="M8 12.5 H2.5 V1.5 H14.5 V6.5 M8.5 1.5 V8.5" fill="none" stroke="#444" stroke-width="1.1"/><path d="M6.5 10.5 L9.5 13.5 L15 8" fill="none" stroke="#444" stroke-width="1.1"/></svg>
<svg class="r" style="left:190px;top:708px;" width="19" height="17" viewBox="0 0 19 17"><circle cx="8" cy="3" r="1.9" fill="none" stroke="#444" stroke-width="1.05"/><path d="M2.2 5.3 C3 3.8 4.5 5 6 5.6 C7.3 6.1 8.7 6.1 10 5.6 C11.5 5 13 3.8 13.8 5.3 C14.3 6.5 12.5 7.3 11 7.5 V10 M5 7.5 C3.5 7.3 1.7 6.5 2.2 5.3 M5 7.5 V10 L3.5 14 C3.2 15 4 15.5 5 14.8" fill="none" stroke="#444" stroke-width="1.05"/><path d="M8.3 11 L11.4 14.4 L16.6 9.2" fill="none" stroke="#444" stroke-width="1.1"/></svg>
<div class="t" style="left:209.00px;top:710.86px;font-size:12.21px;color:#444;font-weight:400;font-family:'Liberation Sans',sans-serif;transform:scaleX(0.9503);transform-origin:0 0;">Accessibility: Good to go</div>
<svg class="r" style="left:880px;top:708px;" width="17" height="16" viewBox="0 0 17 16"><path d="M1.5 4 V1.5 H4 M12 1.5 H14.5 V4 M14.5 12 V14.5 H12 M4 14.5 H1.5 V12" fill="none" stroke="#444" stroke-width="1"/><path d="M4.5 3.5 H9 L11.5 6 V12.5 H4.5Z M9 3.5 V6 H11.5" fill="none" stroke="#444" stroke-width="1"/></svg>
<div class="t" style="left:898.50px;top:710.66px;font-size:12.21px;color:#444;font-weight:400;font-family:'Liberation Sans',sans-serif;transform:scaleX(0.8876);transform-origin:0 0;">Focus</div>
<svg class="r" style="left:952px;top:709px;" width="15" height="14" viewBox="0 0 15 14"><path d="M0.5 0.5 H6.5 L7 1 L7.5 0.5 H13.5 V11.5 H7.5 L7 12 L6.5 11.5 H0.5Z M7 1 V12" fill="none" stroke="#444" stroke-width="1"/><path d="M2 3.5 H5.5 M2 5.5 H5.5 M2 7.5 H5.5 M2 9.5 H5.5 M8.5 3.5 H12 M8.5 5.5 H12 M8.5 7.5 H12 M8.5 9.5 H12" stroke="#444" stroke-width="1"/></svg>
<div class="r" style="left:980px;top:706px;width:40px;height:21px;background:#D2D0CE"></div>
<svg class="r" style="left:994px;top:709px;" width="12" height="15" viewBox="0 0 12 15"><rect x="0.5" y="0.5" width="11" height="13" fill="none" stroke="#444" stroke-width="1"/><path d="M2.5 3.5 H9.5 M2.5 5.5 H9.5 M2.5 7.5 H9.5 M2.5 9.5 H9.5 M2.5 11.5 H9.5" stroke="#444" stroke-width="1"/></svg>
<svg class="r" style="left:1033px;top:709px;" width="15" height="15" viewBox="0 0 15 15"><path d="M0.5 0.5 H12.5 V6 M0.5 0.5 V13.5 H5" fill="none" stroke="#444" stroke-width="1"/><path d="M2.5 3.5 H10.5 M2.5 5.5 H8 M2.5 7.5 H6 M2.5 9.5 H5" stroke="#444" stroke-width="1"/><circle cx="10.5" cy="10.5" r="4" fill="#444"/><path d="M6.5 10.5 H14.5 M10.5 6.5 V14.5" stroke="#F3F2F1" stroke-width="0.9"/><ellipse cx="10.5" cy="10.5" rx="1.6" ry="4" fill="none" stroke="#F3F2F1" stroke-width="0.8"/></svg>
<div class="r" style="left:1066px;top:716px;width:8px;height:1px;background:#444"></div>
<div class="r" style="left:1079px;top:716px;width:100px;height:1px;background:#767472"></div>
<div class="r" style="left:1127px;top:711px;width:5px;height:11px;background:#767472"></div>
<svg class="r" style="left:1183px;top:711px;" width="10" height="10" viewBox="0 0 10 10"><path d="M5 1 V9 M1 5 H9" stroke="#444" stroke-width="1"/></svg>
<div class="t" style="left:1205.00px;top:710.86px;font-size:12.21px;color:#444;font-weight:400;font-family:'Liberation Sans',sans-serif;transform:scaleX(0.8657);transform-origin:0 0;">100%</div>
<svg class="r" style="left:1154px;top:659px;" width="14" height="22" viewBox="0 0 14 22"><path d="M1.5 1.5 V17 L5 13.5 L8 20 L10.5 19 L7.5 12.5 H12.5Z" fill="#FFFFFF" stroke="#000" stroke-width="1" stroke-linejoin="round"/></svg>
<div class="r" style="left:268px;top:207px;width:690px;height:446px;background:#F0F0F0;border:1px solid #6F6F6F;box-sizing:border-box;box-shadow:0 4px 22px 4px rgba(0,0,0,0.22)"></div>
<div class="r" style="left:269px;top:208px;width:688px;height:30px;background:#FFFFFF"></div>
<div class="t" style="left:277.00px;top:216.62px;font-size:12.50px;color:#000;font-weight:400;font-family:'Liberation Sans',sans-serif;transform:scaleX(0.9037);transform-origin:0 0;">Field</div>
<div class="t" style="left:886.00px;top:217.56px;font-size:11.50px;color:#000;font-weight:400;font-family:'Liberation Sans',sans-serif;">?</div>
<svg class="r" style="left:928px;top:216px;" width="12" height="12" viewBox="0 0 12 12"><path d="M0.8 0.8 L11.2 11.2 M11.2 0.8 L0.8 11.2" stroke="#000" stroke-width="1"/></svg>
<div class="t" style="left:275.00px;top:246.57px;font-size:11.26px;color:#000;font-weight:400;font-family:'Liberation Sans',sans-serif;">Please choose a field</div>
<div class="r" style="left:387px;top:251px;width:54px;height:1px;background:#DCDCDC"></div>
<div class="r" style="left:450px;top:245px;width:1px;height:328px;background:#A0A0A0"></div>
<div class="r" style="left:451px;top:245px;width:1px;height:328px;background:#FFFFFF"></div>
<div class="t" style="left:284.00px;top:266.70px;font-size:11.34px;color:#000;font-weight:400;font-family:'Liberation Sans',sans-serif;"><u>C</u>ategories:</div>
<div class="r" style="left:284px;top:281px;width:157px;height:22px;background:#FFFFFF;border:1px solid #A6A6A6;box-sizing:border-box"></div>
<div class="r" style="left:423px;top:281px;width:18px;height:22px;background:#E1E1E1;border:1px solid #A6A6A6;border-right-width:2px;box-sizing:border-box"></div>
<svg class="r" style="left:426px;top:288px;" width="11" height="8" viewBox="0 0 11 8"><path d="M1.2 1.5 L5 5.3 L8.8 1.5" fill="none" stroke="#333" stroke-width="1.3"/></svg>
<div class="t" style="left:288.00px;top:286.93px;font-size:11.30px;color:#000;font-weight:400;font-family:'Liberation Sans',sans-serif;">(All)</div>
<div class="t" style="left:284.00px;top:307.63px;font-size:11.18px;color:#000;font-weight:400;font-family:'Liberation Sans',sans-serif;"><u>F</u>ield names:</div>
<div class="r" style="left:284px;top:322px;width:157px;height:238px;background:#FFFFFF;border:1px solid #828790;box-sizing:border-box"></div>
<div class="r" style="left:286px;top:376px;width:136px;height:13px;background:#0078D7;outline:1px dotted #E0A040;outline-offset:-1px"></div>
<div class="t" style="left:288.00px;top:326.26px;font-size:11.50px;color:#000;font-weight:400;font-family:'Liberation Sans',sans-serif;">NextIf</div>
<div class="t" style="left:288.00px;top:339.26px;font-size:11.50px;color:#000;font-weight:400;font-family:'Liberation Sans',sans-serif;">NoteRef</div>
<div class="t" style="left:288.00px;top:352.26px;font-size:11.50px;color:#000;font-weight:400;font-family:'Liberation Sans',sans-serif;">NumChars</div>
<div class="t" style="left:288.00px;top:365.26px;font-size:11.50px;color:#000;font-weight:400;font-family:'Liberation Sans',sans-serif;">NumPages</div>
<div class="t" style="left:288.00px;top:378.26px;font-size:11.50px;color:#FFFFFF;font-weight:400;font-family:'Liberation Sans',sans-serif;">NumWords</div>
<div class="t" style="left:288.00px;top:391.26px;font-size:11.50px;color:#000;font-weight:400;font-family:'Liberation Sans',sans-serif;">Page</div>
<div class="t" style="left:288.00px;top:404.26px;font-size:11.50px;color:#000;font-weight:400;font-family:'Liberation Sans',sans-serif;">PageRef</div>
<div class="t" style="left:288.00px;top:417.26px;font-size:11.50px;color:#000;font-weight:400;font-family:'Liberation Sans',sans-serif;">Print</div>
<div class="t" style="left:288.00px;top:430.26px;font-size:11.50px;color:#000;font-weight:400;font-family:'Liberation Sans',sans-serif;">PrintDate</div>
<div class="t" style="left:288.00px;top:443.26px;font-size:11.50px;color:#000;font-weight:400;font-family:'Liberation Sans',sans-serif;">Private</div>
<div class="t" style="left:288.00px;top:456.26px;font-size:11.50px;color:#000;font-weight:400;font-family:'Liberation Sans',sans-serif;">Quote</div>
<div class="t" style="left:288.00px;top:469.26px;font-size:11.50px;color:#000;font-weight:400;font-family:'Liberation Sans',sans-serif;">RD</div>
<div class="t" style="left:288.00px;top:482.26px;font-size:11.50px;color:#000;font-weight:400;font-family:'Liberation Sans',sans-serif;">Ref</div>
<div class="t" style="left:288.00px;top:495.26px;font-size:11.50px;color:#000;font-weight:400;font-family:'Liberation Sans',sans-serif;">RevNum</div>
<div class="t" style="left:288.00px;top:508.26px;font-size:11.50px;color:#000;font-weight:400;font-family:'Liberation Sans',sans-serif;">SaveDate</div>
<div class="t" style="left:288.00px;top:521.26px;font-size:11.50px;color:#000;font-weight:400;font-family:'Liberation Sans',sans-serif;">Section</div>
<div class="t" style="left:288.00px;top:534.26px;font-size:11.50px;color:#000;font-weight:400;font-family:'Liberation Sans',sans-serif;">SectionPages</div>
<div class="t" style="left:288.00px;top:547.26px;font-size:11.50px;color:#000;font-weight:400;font-family:'Liberation Sans',sans-serif;">Seq</div>
<div class="r" style="left:423px;top:323px;width:17px;height:236px;background:#FFFFFF"></div>
<div class="r" style="left:423px;top:453px;width:15px;height:47px;background:#CDCDCD"></div>
<svg class="r" style="left:426px;top:329px;" width="11" height="8" viewBox="0 0 11 8"><path d="M1.5 6 L5.5 2 L9.5 6" fill="none" stroke="#505050" stroke-width="1.4"/></svg>
<svg class="r" style="left:426px;top:545px;" width="11" height="8" viewBox="0 0 11 8"><path d="M1.5 2 L5.5 6 L9.5 2" fill="none" stroke="#505050" stroke-width="1.4"/></svg>
<div class="t" style="left:461.00px;top:246.45px;font-size:11.75px;color:#000;font-weight:400;font-family:'Liberation Sans',sans-serif;">Field properties</div>
<div class="r" style="left:547px;top:251px;width:134px;height:1px;background:#DCDCDC"></div>
<div class="r" style="left:690px;top:245px;width:1px;height:328px;background:#A0A0A0"></div>
<div class="r" style="left:691px;top:245px;width:1px;height:328px;background:#FFFFFF"></div>
<div class="t" style="left:470.50px;top:266.54px;font-size:11.18px;color:#000;font-weight:400;font-family:'Liberation Sans',sans-serif;">Forma<u>t</u>:</div>
<div class="r" style="left:470px;top:281px;width:211px;height:147px;background:#FFFFFF;border:1px solid #828790;box-sizing:border-box"></div>
<div class="r" style="left:472px;top:283px;width:190px;height:13px;background:#0078D7"></div>
<div class="t" style="left:474.00px;top:284.56px;font-size:11.50px;color:#FFFFFF;font-weight:400;font-family:'Liberation Sans',sans-serif;">(none)</div>
<div class="t" style="left:474.00px;top:297.56px;font-size:11.50px;color:#000;font-weight:400;font-family:'Liberation Sans',sans-serif;">1, 2, 3, ...</div>
<div class="t" style="left:474.00px;top:310.56px;font-size:11.50px;color:#000;font-weight:400;font-family:'Liberation Sans',sans-serif;">a, b, c, ...</div>
<div class="t" style="left:474.00px;top:323.56px;font-size:11.50px;color:#000;font-weight:400;font-family:'Liberation Sans',sans-serif;">A, B, C, ...</div>
<div class="t" style="left:474.00px;top:336.56px;font-size:11.50px;color:#000;font-weight:400;font-family:'Liberation Sans',sans-serif;">i, ii, iii, ...</div>
<div class="t" style="left:474.00px;top:349.56px;font-size:11.50px;color:#000;font-weight:400;font-family:'Liberation Sans',sans-serif;">I, II, III, ...</div>
<div class="t" style="left:474.00px;top:362.56px;font-size:11.50px;color:#000;font-weight:400;font-family:'Liberation Sans',sans-serif;">1st, 2nd, 3rd ...</div>
<div class="t" style="left:474.00px;top:375.56px;font-size:11.50px;color:#000;font-weight:400;font-family:'Liberation Sans',sans-serif;">One, Two, Three ...</div>
<div class="t" style="left:474.00px;top:388.56px;font-size:11.50px;color:#000;font-weight:400;font-family:'Liberation Sans',sans-serif;">First Second, Third ...</div>
<div class="t" style="left:474.00px;top:401.56px;font-size:11.50px;color:#000;font-weight:400;font-family:'Liberation Sans',sans-serif;">hex ...</div>
<div class="t" style="left:474.00px;top:414.56px;font-size:11.50px;color:#000;font-weight:400;font-family:'Liberation Sans',sans-serif;">Dollar Text</div>
<div class="r" style="left:663px;top:300px;width:15px;height:80px;background:#CDCDCD"></div>
<svg class="r" style="left:665px;top:289px;" width="11" height="8" viewBox="0 0 11 8"><path d="M1.5 6 L5.5 2 L9.5 6" fill="none" stroke="#505050" stroke-width="1.4"/></svg>
<svg class="r" style="left:665px;top:413px;" width="11" height="8" viewBox="0 0 11 8"><path d="M1.5 2 L5.5 6 L9.5 2" fill="none" stroke="#505050" stroke-width="1.4"/></svg>
<div class="t" style="left:470.50px;top:439.80px;font-size:11.11px;color:#000;font-weight:400;font-family:'Liberation Sans',sans-serif;">N<u>u</u>meric format:</div>
<div class="r" style="left:470px;top:454px;width:211px;height:21px;background:#FFFFFF;border:1px solid #7A7A7A;box-sizing:border-box"></div>
<div class="r" style="left:470px;top:474px;width:211px;height:95px;background:#FFFFFF;border:1px solid #828790;box-sizing:border-box"></div>
<div class="t" style="left:473.00px;top:477.86px;font-size:11.50px;color:#000;font-weight:400;font-family:'Liberation Sans',sans-serif;">0</div>
<div class="t" style="left:473.00px;top:490.86px;font-size:11.50px;color:#000;font-weight:400;font-family:'Liberation Sans',sans-serif;">0.00</div>
<div class="t" style="left:473.00px;top:503.86px;font-size:11.50px;color:#000;font-weight:400;font-family:'Liberation Sans',sans-serif;">#,##0</div>
<div class="t" style="left:473.00px;top:516.86px;font-size:11.50px;color:#000;font-weight:400;font-family:'Liberation Sans',sans-serif;">#,##0.00</div>
<div class="t" style="left:473.00px;top:529.86px;font-size:11.50px;color:#000;font-weight:400;font-family:'Liberation Sans',sans-serif;">$#,##0.00;($#,##0.00)</div>
<div class="t" style="left:473.00px;top:542.86px;font-size:11.50px;color:#000;font-weight:400;font-family:'Liberation Sans',sans-serif;">0%</div>
<div class="t" style="left:473.00px;top:555.86px;font-size:11.50px;color:#000;font-weight:400;font-family:'Liberation Sans',sans-serif;">0.00%</div>
<div class="r" style="left:663px;top:476px;width:15px;height:92px;background:#F0F0F0"></div>
<svg class="r" style="left:665px;top:480px;" width="11" height="8" viewBox="0 0 11 8"><path d="M1.5 6 L5.5 2 L9.5 6" fill="none" stroke="#C0C0C0" stroke-width="1.2"/></svg>
<svg class="r" style="left:665px;top:554px;" width="11" height="8" viewBox="0 0 11 8"><path d="M1.5 2 L5.5 6 L9.5 2" fill="none" stroke="#C0C0C0" stroke-width="1.2"/></svg>
<div class="t" style="left:701.00px;top:245.85px;font-size:11.99px;color:#000;font-weight:400;font-family:'Liberation Sans',sans-serif;">Field options</div>
<div class="r" style="left:774px;top:251px;width:177px;height:1px;background:#DCDCDC"></div>
<div class="t" style="left:730.50px;top:386.69px;font-size:12.05px;color:#000;font-weight:400;font-family:'Liberation Sans',sans-serif;">No field options available for this field</div>
<div class="r" style="left:710px;top:554px;width:13px;height:13px;background:#FFFFFF;border:1px solid #333;box-sizing:border-box"></div>
<svg class="r" style="left:710px;top:554px;" width="13" height="13" viewBox="0 0 13 13"><path d="M2.5 6.5 L5.2 9.3 L10.5 3" fill="none" stroke="#222" stroke-width="1.1"/></svg>
<div class="t" style="left:727.00px;top:554.95px;font-size:11.75px;color:#000;font-weight:400;font-family:'Liberation Sans',sans-serif;">Preser<u>v</u>e formatting during updates</div>
<div class="t" style="left:275.00px;top:578.26px;font-size:11.74px;color:#000;font-weight:400;font-family:'Liberation Sans',sans-serif;">Description:</div>
<div class="t" style="left:293.00px;top:594.80px;font-size:11.82px;color:#000;font-weight:400;font-family:'Liberation Sans',sans-serif;">The number of words in the document</div>
<div class="r" style="left:275px;top:622px;width:77px;height:22px;background:#E1E1E1;border:1px solid #ADADAD;box-sizing:border-box"></div>
<div class="t" style="left:283.50px;top:627.78px;font-size:11.25px;color:#000;font-weight:400;font-family:'Liberation Sans',sans-serif;">F<u>i</u>eld Codes</div>
<div class="r" style="left:792px;top:622px;width:74px;height:22px;background:#E1E1E1;border:2px solid #0078D7;box-sizing:border-box"></div>
<div class="t" style="left:820.48px;top:628.11px;font-size:11.80px;color:#000;font-weight:400;font-family:'Liberation Sans',sans-serif;">OK</div>
<div class="r" style="left:876px;top:622px;width:74px;height:22px;background:#E1E1E1;border:1px solid #ADADAD;box-sizing:border-box"></div>
<div class="t" style="left:895.59px;top:628.62px;font-size:11.20px;color:#000;font-weight:400;font-family:'Liberation Sans',sans-serif;">Cancel</div>
<div class="r" style="left:785px;top:613px;width:86px;height:39px;border:3px solid #000;border-radius:5px;box-sizing:border-box"></div>
<div class="t" style="left:56.50px;top:247.45px;font-size:22.38px;color:#111;font-weight:700;font-family:'Liberation Sans',sans-serif;transform:scaleX(1.0343);transform-origin:0 0;">NumWords</div>
<div class="t" style="left:541.80px;top:180.42px;font-size:21.95px;color:#111;font-weight:700;font-family:'Liberation Sans',sans-serif;transform:scaleX(1.0893);transform-origin:0 0;">Format</div>
<svg class="r" style="left:0px;top:0px;" width="1252" height="728" viewBox="0 0 1252 728"><line x1="110.5" y1="270.8" x2="272" y2="377.3" stroke="#000" stroke-width="3.6"/>
<path d="M282.3 383.5 L264.6 378.8 L269 375.5 L271.2 369.2Z" fill="#000"/>
<line x1="577.5" y1="206" x2="577.5" y2="258" stroke="#000" stroke-width="3"/>
<path d="M577.5 271 L571.5 253.5 L583.5 253.5Z" fill="#000"/></svg>
</body></html>
